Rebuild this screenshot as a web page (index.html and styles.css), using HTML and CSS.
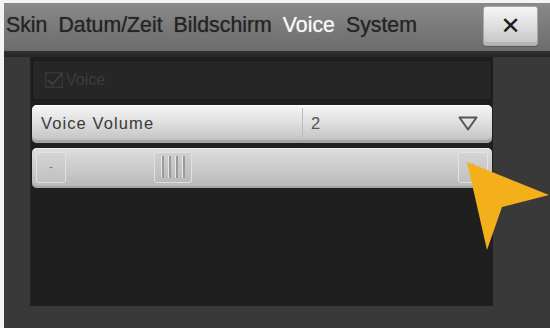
FILE: index.html
```html
<!DOCTYPE html>
<html lang="de">
<head>
  <meta charset="UTF-8">
  <meta name="viewport" content="width=device-width, initial-scale=1.0">
  <title>Einstellungen - Voice</title>
  <link rel="stylesheet" href="styles.css">
</head>
<body>

  <div class="screen">
    <!-- Tab Bar -->
    <div class="tabbar">
      <nav class="tabs">
        <span class="tab">Skin</span>
        <span class="tab">Datum/Zeit</span>
        <span class="tab">Bildschirm</span>
        <span class="tab active">Voice</span>
        <span class="tab">System</span>
      </nav>
      <button class="close-btn">&#x2715;</button>
    </div>

    <div class="separator"></div>

    <!-- Content -->
    <div class="content">
      <div class="panel">
        <div class="check-row">
          <span class="checkbox">
            <svg width="18" height="16" viewBox="0 0 18 16">
              <rect x="0.75" y="0.75" width="16.5" height="14.5" fill="none" stroke="#363636" stroke-width="1.5"/>
              <path d="M3 8 L7.5 12.5 L17 1.5" fill="none" stroke="#404040" stroke-width="1.8"/>
            </svg>
          </span>
          <span class="check-label">Voice</span>
        </div>

        <div class="select-row">
          <span class="select-label">Voice Volume</span>
          <span class="select-value">2</span>
          <svg class="select-arrow" width="20" height="15" viewBox="0 0 20 15">
            <path d="M1.5 1.5 H18.5 L10 13.5 Z" fill="none" stroke="#555" stroke-width="2" stroke-linejoin="round"/>
          </svg>
        </div>

        <div class="slider-row">
          <span class="step-btn">-</span>
          <div class="track">
            <span class="thumb">
              <i></i><i></i><i></i><i></i>
            </span>
          </div>
          <span class="step-btn">+</span>
        </div>
      </div>
    </div>

    <!-- Pointer arrow -->
    <svg class="pointer" width="92" height="96" viewBox="0 0 92 96">
      <polygon points="7,6 89,39 42,51 27,94" fill="#f3b01b"/>
    </svg>
  </div>

</body>
</html>
```

FILE: styles.css
```css
/* Basic Reset */
* {
  margin: 0;
  padding: 0;
  box-sizing: border-box;
}

body {
  background: #f4f4f4;
  font-family: 'Liberation Sans', Arial, sans-serif;
  width: 550px;
  height: 328px;
  overflow: hidden;
}

/* Screen */
.screen {
  position: relative;
  margin: 3px 0 0 4px;
  height: 325px;
  background: #393939;
  display: flex;
  flex-direction: column;
}

/* Tab Bar */
.tabbar {
  height: 48px;
  background: linear-gradient(#8a8a8a, #777777 60%, #6d6d6d);
  display: flex;
  align-items: center;
  justify-content: space-between;
  padding: 0 12px 3px 2px;
}

.tabs {
  display: flex;
  gap: 11px;
}

.tab {
  font-size: 21.3px;
  color: #242424;
  text-shadow: 0 0 1px rgba(30, 30, 30, 0.6);
}

.tab.active {
  color: #f6f6f6;
  text-shadow: 0 0 1px rgba(255, 255, 255, 0.7);
}

.close-btn {
  width: 55px;
  height: 40px;
  border: 1px solid #a8a8a8;
  border-radius: 3px;
  background: linear-gradient(#f6f6f6, #dcdcdc 55%, #c4c4c4);
  box-shadow: inset 0 -3px 0 #b4b4b4, 0 1px 0 #5a5a5a;
  color: #1c1c1c;
  font-size: 24px;
  font-weight: bold;
  font-family: 'DejaVu Sans', sans-serif;
  line-height: 36px;
}

.separator {
  height: 6px;
  background: linear-gradient(#303030, #262626);
}

/* Content */
.content {
  flex: 1;
  display: flex;
  padding: 0 0 22px 26px;
}

.panel {
  width: 463px;
  background: #1f1f1f;
  padding: 3px 1px 0 2px;
  display: flex;
  flex-direction: column;
  gap: 5px;
}

/* Disabled check row */
.check-row {
  height: 40px;
  background: #262626;
  border: 1px solid #1a1a1a;
  display: flex;
  align-items: center;
  padding-left: 12px;
  gap: 3px;
}

.checkbox {
  display: flex;
}

.check-label {
  color: #3c3c3c;
  font-size: 16px;
}

/* Select row */
.select-row {
  height: 38px;
  border-radius: 5px;
  background: linear-gradient(#f6f6f6, #e0e0e0 45%, #c8c8c8 85%, #b8b8b8);
  box-shadow: inset 0 -3px 0 #a3a3a3, inset 0 1px 0 #ffffff;
  display: flex;
  align-items: center;
  padding: 0 14px 2px 9px;
}

.select-label {
  width: 262px;
  font-size: 16.5px;
  letter-spacing: 1.1px;
  color: #3a3a3a;
  border-right: 1px solid #bcbcbc;
  line-height: 30px;
}

.select-value {
  flex: 1;
  padding-left: 8px;
  font-size: 16.5px;
  color: #555;
}

/* Slider row */
.slider-row {
  height: 40px;
  border-radius: 5px;
  background: linear-gradient(#dedede, #cbcbcb 50%, #b8b8b8);
  box-shadow: inset 0 -2px 0 #a2a2a2, inset 0 1px 0 #efefef;
  display: flex;
  align-items: center;
  padding: 0 4px 2px 4px;
  gap: 4px;
}

.step-btn {
  width: 30px;
  height: 31px;
  border: 1px solid #e2e2e2;
  border-radius: 3px;
  background: linear-gradient(#d4d4d4, #c0c0c0);
  color: #777;
  font-size: 12px;
  display: flex;
  align-items: center;
  justify-content: center;
}

.track {
  flex: 1;
  height: 31px;
  padding-left: 84px;
}

.thumb {
  width: 38px;
  height: 31px;
  border: 1px solid #e0e0e0;
  border-radius: 3px;
  background: linear-gradient(#d0d0d0, #bababa);
  display: flex;
  justify-content: center;
  align-items: center;
  gap: 4px;
}

.thumb i {
  width: 3px;
  height: 22px;
  background: #9a9a9a;
  border-left: 1px solid #e6e6e6;
}

/* Pointer overlay */
.pointer {
  position: absolute;
  left: 456px;
  top: 153px;
}
```
